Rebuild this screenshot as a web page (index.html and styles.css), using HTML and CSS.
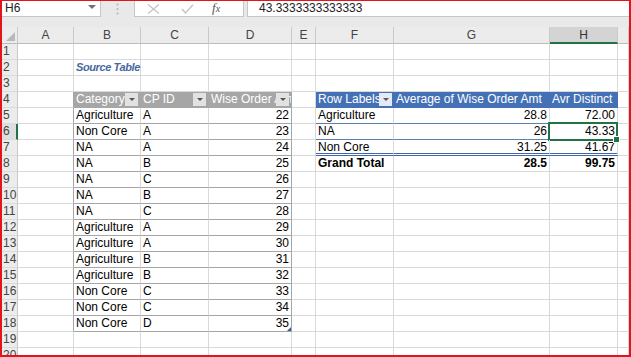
FILE: index.html
```html
<!DOCTYPE html>
<html lang="en">

<head>
  <meta charset="UTF-8">
  <title>Book1 - Excel</title>
  <link rel="stylesheet" href="styles.css">
</head>

<body>
  <div class="frame">

    <!-- name box + formula bar -->
    <div class="fbar">
      <div class="namebox">H6<span class="drop"></span></div>
      <div class="grip">
        <svg width="3" height="12" viewBox="0 0 3 12"><circle cx="1.5" cy="1.5" r="1" fill="#b4b4b4"/><circle cx="1.5" cy="6" r="1" fill="#b4b4b4"/><circle cx="1.5" cy="10.5" r="1" fill="#b4b4b4"/></svg>
      </div>
      <div class="fxbox">
        <svg class="ico" width="13" height="10" viewBox="0 0 13 10"><path d="M1 0.5 L12 9.5 M12 0.5 L1 9.5" stroke="#c4c4c4" stroke-width="1.3" fill="none"/></svg>
        <svg class="ico" width="13" height="10" viewBox="0 0 13 10"><path d="M1 5 L4.5 9 L12 0.8" stroke="#c4c4c4" stroke-width="1.4" fill="none"/></svg>
        <span class="fx"><i>f</i><span>x</span></span>
      </div>
      <div class="input">43.3333333333333</div>
    </div>

    <!-- column headers -->
    <div class="row hdr">
      <div class="corner"><svg width="9" height="9" viewBox="0 0 9 9"><path d="M9 0 L9 9 L0 9 Z" fill="#b9b9b9"/></svg></div>
      <div>A</div><div>B</div><div>C</div><div>D</div><div>E</div><div>F</div><div>G</div><div class="sel">H</div><div></div>
    </div>

    <div class="row"><div class="rh">1</div><div></div><div></div><div></div><div></div><div></div><div></div><div></div><div></div><div></div></div>
    <div class="row"><div class="rh">2</div><div></div><div class="src">Source Table</div><div></div><div></div><div></div><div></div><div></div><div></div><div></div></div>
    <div class="row"><div class="rh">3</div><div></div><div></div><div></div><div></div><div></div><div></div><div></div><div></div><div></div></div>

    <div class="row">
      <div class="rh">4</div><div class="ta"></div>
      <div class="th">Category<span class="fb"></span></div>
      <div class="th">CP ID<span class="fb"></span></div>
      <div class="th">Wise Order Amt<span class="fb"></span></div>
      <div></div>
      <div class="ph">Row Labels<span class="fb pf"></span></div>
      <div class="ph">Average of Wise Order Amt</div>
      <div class="ph">Avr Distinct</div>
      <div></div>
    </div>
    <div class="row">
      <div class="rh">5</div><div class="ta"></div>
      <div class="tb">Agriculture</div><div class="tb">A</div><div class="tb tl n">22</div><div></div>
      <div class="pb">Agriculture</div><div class="pb n">28.8</div><div class="pb n">72.00</div><div></div>
    </div>
    <div class="row">
      <div class="rh on">6</div><div class="ta"></div>
      <div class="tb">Non Core</div><div class="tb">A</div><div class="tb tl n">23</div><div></div>
      <div class="pb">NA</div><div class="pb n">26</div><div class="pb n cur">43.33</div><div></div>
    </div>
    <div class="row">
      <div class="rh">7</div><div class="ta"></div>
      <div class="tb">NA</div><div class="tb">A</div><div class="tb tl n">24</div><div></div>
      <div class="pb dbl">Non Core</div><div class="pb dbl n">31.25</div><div class="pb dbl n">41.67</div><div></div>
    </div>
    <div class="row">
      <div class="rh">8</div><div class="ta"></div>
      <div class="tb">NA</div><div class="tb">B</div><div class="tb tl n">25</div><div></div>
      <div class="gt">Grand Total</div><div class="gt n">28.5</div><div class="gt n">99.75</div><div></div>
    </div>
    <div class="row"><div class="rh">9</div><div class="ta"></div><div class="tb">NA</div><div class="tb">C</div><div class="tb tl n">26</div><div></div><div></div><div></div><div></div><div></div></div>
    <div class="row"><div class="rh">10</div><div class="ta"></div><div class="tb">NA</div><div class="tb">B</div><div class="tb tl n">27</div><div></div><div></div><div></div><div></div><div></div></div>
    <div class="row"><div class="rh">11</div><div class="ta"></div><div class="tb">NA</div><div class="tb">C</div><div class="tb tl n">28</div><div></div><div></div><div></div><div></div><div></div></div>
    <div class="row"><div class="rh">12</div><div class="ta"></div><div class="tb">Agriculture</div><div class="tb">A</div><div class="tb tl n">29</div><div></div><div></div><div></div><div></div><div></div></div>
    <div class="row"><div class="rh">13</div><div class="ta"></div><div class="tb">Agriculture</div><div class="tb">A</div><div class="tb tl n">30</div><div></div><div></div><div></div><div></div><div></div></div>
    <div class="row"><div class="rh">14</div><div class="ta"></div><div class="tb">Agriculture</div><div class="tb">B</div><div class="tb tl n">31</div><div></div><div></div><div></div><div></div><div></div></div>
    <div class="row"><div class="rh">15</div><div class="ta"></div><div class="tb">Agriculture</div><div class="tb">B</div><div class="tb tl n">32</div><div></div><div></div><div></div><div></div><div></div></div>
    <div class="row"><div class="rh">16</div><div class="ta"></div><div class="tb">Non Core</div><div class="tb">C</div><div class="tb tl n">33</div><div></div><div></div><div></div><div></div><div></div></div>
    <div class="row"><div class="rh">17</div><div class="ta"></div><div class="tb">Non Core</div><div class="tb">C</div><div class="tb tl n">34</div><div></div><div></div><div></div><div></div><div></div></div>
    <div class="row"><div class="rh">18</div><div class="ta"></div><div class="tb">Non Core</div><div class="tb">D</div><div class="tb tl n end">35</div><div></div><div></div><div></div><div></div><div></div></div>
    <div class="row"><div class="rh">19</div><div></div><div></div><div></div><div></div><div></div><div></div><div></div><div></div><div></div></div>
    <div class="row"><div class="rh">20</div><div></div><div></div><div></div><div></div><div></div><div></div><div></div><div></div><div></div></div>

  </div>
</body>

</html>
```

FILE: styles.css
```css
body {
  margin: 0;
  font-family: "Liberation Sans", Arial, sans-serif;
  font-size: 12px;
  color: #000;
  background: #fff;
}

.frame {
  width: 631px;
  height: 357px;
  box-sizing: border-box;
  border: 2px solid #e3141c;
  border-top-width: 1px;
  overflow: hidden;
  background: #fff;
}

/* formula bar */
.fbar {
  display: flex;
  align-items: flex-start;
  height: 26px;
  background: #e9e9e9;
}

.fbar > div {
  height: 16px;
  box-sizing: border-box;
}

.namebox {
  position: relative;
  width: 99px;
  background: #fff;
  border-right: 1px solid #c6c6c6;
  border-bottom: 1px solid #c6c6c6;
  padding-left: 3px;
  line-height: 15px;
  color: #222;
}

.drop {
  position: absolute;
  left: 86px;
  top: 4px;
  border-left: 4px solid transparent;
  border-right: 4px solid transparent;
  border-top: 4px solid #707070;
}

.grip {
  width: 33px;
  display: flex;
  align-items: center;
  justify-content: center;
  padding-bottom: 1px;
}

.fxbox {
  width: 110px;
  display: flex;
  align-items: center;
  background: #fff;
  border: 1px solid #c6c6c6;
  border-top: none;
  padding-left: 12px;
}

.ico {
  margin-right: 21px;
}

.fx {
  font-family: "Liberation Serif", serif;
  color: #555;
  font-size: 13px;
  line-height: 14px;
  margin-left: -3px;
}

.fx span {
  font-size: 10px;
  font-style: italic;
}

.input {
  flex: 1;
  margin-left: 3px;
  background: #fff;
  border-left: 1px solid #c6c6c6;
  border-bottom: 1px solid #c6c6c6;
  padding-left: 11px;
  line-height: 15px;
  color: #222;
}

/* grid */
.row {
  display: grid;
  grid-template-columns: 16px 56px 67px 68px 83px 24px 78px 156px 68px 1fr;
  height: 16px;
}

.row > div {
  position: relative;
  box-sizing: border-box;
  border-right: 1px solid #d9d9d9;
  border-bottom: 1px solid #d9d9d9;
  padding: 0 2px;
  line-height: 15px;
  white-space: nowrap;
  overflow: hidden;
}

.hdr {
  height: 17px;
}

.hdr > div {
  background: #ececec;
  border-right-color: #c9c9c9;
  border-bottom-color: #bcbcbc;
  text-align: center;
  color: #444;
  line-height: 16px;
}

.hdr .corner {
  display: flex;
  align-items: flex-end;
  justify-content: flex-end;
  padding: 0 2px 2px 0;
}

.hdr .sel {
  background: #d4d4d4;
  border-bottom: 2px solid #217346;
  color: #333;
}

.rh {
  background: #ececec;
  color: #444;
  border-right-color: #c9c9c9 !important;
  border-bottom-color: #dadada !important;
}

.row > .rh {
  padding: 0 0 0 1px;
}

.row > .rh.on {
  background: #dedede;
  border-right: 2px solid #217346 !important;
}

.n {
  text-align: right;
}

.row > .n {
  padding-right: 2px;
}

/* title spills into the empty cell next to it, like Excel does */
.row > .src {
  overflow: visible;
  z-index: 1;
  color: #46699f;
  font-style: italic;
  font-weight: bold;
  font-size: 11px;
  letter-spacing: -0.4px;
}

/* source table */
.row > .ta {
  border-right-color: #a6a6a6;
}

.row > .th {
  background: #a6a6a6;
  color: #fff;
  border-color: #a6a6a6;
}

.row > .tb {
  border-bottom-color: #a6a6a6;
}

.row > .tl {
  border-right-color: #a6a6a6;
}

.end::after {
  content: "";
  position: absolute;
  right: 0;
  bottom: 0;
  border-left: 4px solid transparent;
  border-bottom: 4px solid #3f5f8f;
}

.fb {
  position: absolute;
  right: 2px;
  top: 1px;
  width: 13px;
  height: 13px;
  background: #e2e2e2;
}

.fb::after {
  content: "";
  position: absolute;
  left: 4px;
  top: 5px;
  border-left: 3px solid transparent;
  border-right: 3px solid transparent;
  border-top: 3px solid #555;
}

.fb.pf {
  right: 1px;
  background: #e4eaf3;
}

/* pivot table */
.row > .ph {
  background: #4471b6;
  color: #fff;
  border-color: #4471b6;
}

.row > .pb {
  border-bottom-color: #5d7fb6;
}

.row > .dbl {
  border-bottom: 3px double #3f66a6;
}

.gt {
  font-weight: bold;
}

/* active cell */
.row > .cur {
  overflow: visible;
}

.cur::after {
  content: "";
  position: absolute;
  left: -2px;
  top: -2px;
  right: -1px;
  bottom: -2px;
  border: 2px solid #217346;
}

.cur::before {
  content: "";
  position: absolute;
  right: -3px;
  bottom: -4px;
  width: 5px;
  height: 5px;
  background: #217346;
  border: 1px solid #fff;
  z-index: 1;
}
```
